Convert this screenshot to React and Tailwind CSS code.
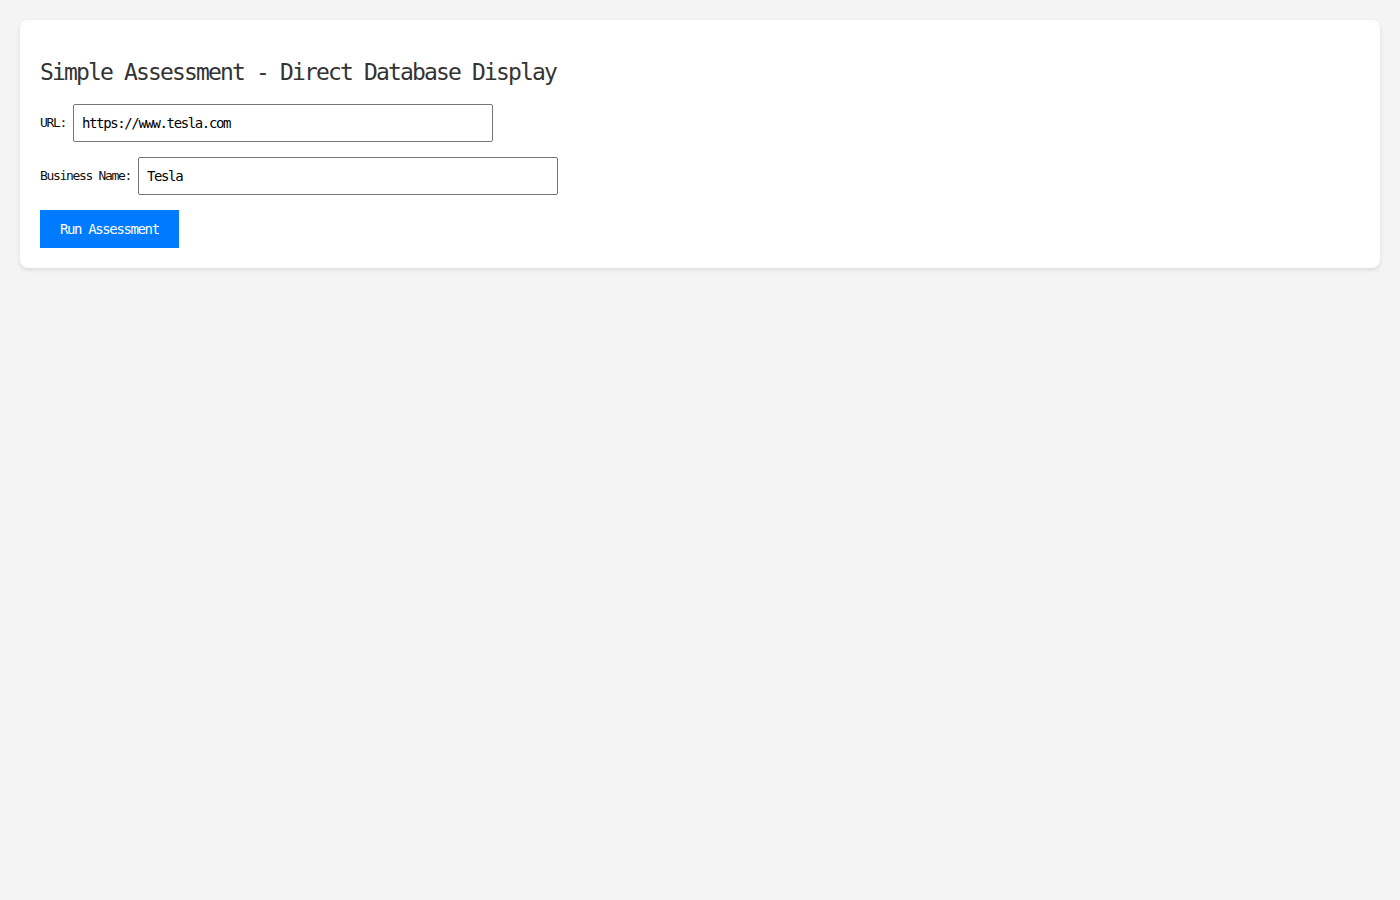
import React from "react";

function Field({ label, value }) {
  return (
    <div className="flex items-center mb-[15px]">
      <label className="text-[13px] tracking-[-1.33px] text-[#111] mr-[7px]">{label}</label>
      <input
        type="text"
        defaultValue={value}
        className="w-[420px] h-[38px] px-2 border border-[#767676] rounded-[2px] bg-white text-[14px] tracking-[-1.38px] text-black outline-none font-['DejaVu_Sans_Mono',monospace]"
      />
    </div>
  );
}

export default function App() {
  return (
    <div className="min-h-screen bg-[#f4f4f4] p-5 font-['DejaVu_Sans_Mono',monospace]">
      <div className="bg-white rounded-lg shadow-[0_2px_4px_rgba(0,0,0,0.1)] px-5 pt-9 pb-5">
        <h1 className="text-[23px] leading-[32px] tracking-[-1.85px] text-[#333] font-normal mb-4">
          Simple Assessment - Direct Database Display
        </h1>
        <Field label="URL:" value="https://www.tesla.com" />
        <Field label="Business Name:" value="Tesla" />
        <button className="h-[38px] px-5 bg-[#007bff] text-white text-[14px] tracking-[-1.38px] font-['DejaVu_Sans_Mono',monospace]">
          Run Assessment
        </button>
      </div>
    </div>
  );
}
